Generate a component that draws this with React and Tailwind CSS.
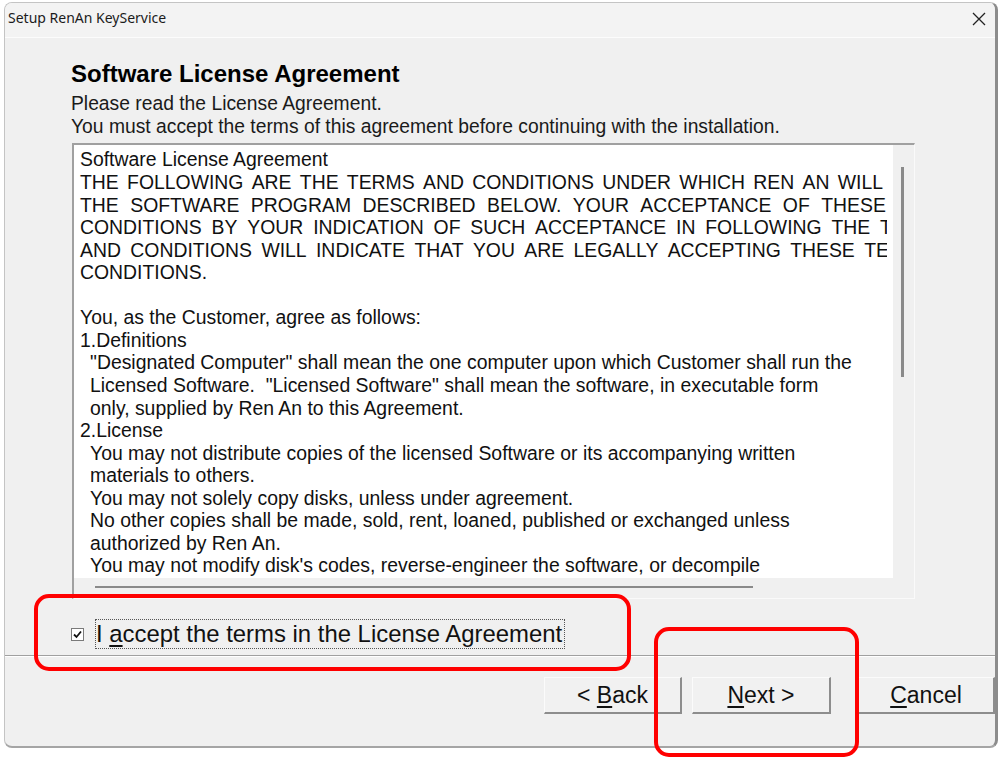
import React from 'react';

const caps = [
  { words: 'THE FOLLOWING ARE THE TERMS AND CONDITIONS UNDER WHICH REN AN WILL', w: 'w-[803px]' },
  { words: 'THE SOFTWARE PROGRAM DESCRIBED BELOW. YOUR ACCEPTANCE OF THESE', w: 'w-[806px]' },
  { words: 'CONDITIONS BY YOUR INDICATION OF SUCH ACCEPTANCE IN FOLLOWING THE TERMS', w: 'w-[868px]' },
  { words: 'AND CONDITIONS WILL INDICATE THAT YOU ARE LEGALLY ACCEPTING THESE TERMS', w: 'w-[852px]' },
];

const body = [
  { t: '' },
  { t: 'You, as the Customer, agree as follows:' },
  { t: '1.Definitions' },
  { t: '"Designated Computer" shall mean the one computer upon which Customer shall run the', i: true },
  { t: 'Licensed Software.  "Licensed Software" shall mean the software, in executable form', i: true },
  { t: 'only, supplied by Ren An to this Agreement.', i: true },
  { t: '2.License' },
  { t: 'You may not distribute copies of the licensed Software or its accompanying written', i: true },
  { t: 'materials to others.', i: true },
  { t: 'You may not solely copy disks, unless under agreement.', i: true },
  { t: 'No other copies shall be made, sold, rent, loaned, published or exchanged unless', i: true },
  { t: 'authorized by Ren An.', i: true },
  { t: "You may not modify disk's codes, reverse-engineer the software, or decompile", i: true },
];

const Btn = ({ mn, rest, pre = '', w }) => (
  <button className={`${w} h-[37px] bg-[#f1f1f1] border-t border-l border-t-[#fbfbfb] border-l-[#fbfbfb] border-r-2 border-b-2 border-r-[#8d8d8d] border-b-[#8d8d8d] text-[23px] leading-none text-[#111] flex items-center justify-center whitespace-pre`}>
    {pre}<span className="underline underline-offset-[3px]">{mn}</span>{rest}
  </button>
);

export default function App() {
  return (
    <div className="w-[1002px] h-[761px] bg-white relative overflow-hidden pt-[2px] pl-[4px] font-['Liberation_Sans',Arial,sans-serif] text-[#111]">
      <div className="w-[994px] h-[746px] flex flex-col rounded-[8px] border border-[#c4c4c4] border-r-[3px] border-r-[#8c8c8c] border-b-2 border-b-[#a5a5a5] bg-[#f0f0f0] overflow-hidden">
        {/* title bar */}
        <div className="h-[35px] shrink-0 bg-[#f3f3f3] border-b border-b-[#fcfcfc] flex items-start justify-between pt-[5px] pl-[3px] pr-[9px]">
          <span className="font-['Noto_Sans',sans-serif] text-[14px] leading-[20px] text-[#1b1b1b]">Setup RenAn KeyService</span>
          <svg className="mt-[4px]" width="14" height="14" viewBox="0 0 14 14">
            <path d="M1 1 L13 13 M13 1 L1 13" stroke="#222" strokeWidth="1.3" />
          </svg>
        </div>

        <div className="flex-1 flex flex-col">
          <div className="pl-[66px] pt-[22px]">
            <h1 className="text-[24px] leading-[28px] font-bold text-black">Software License Agreement</h1>
            <p className="mt-[5px] text-[19.3px] leading-[22.7px] text-[#1a1a1a]">Please read the License Agreement.</p>
            <p className="text-[19.3px] leading-[22.7px] text-[#1a1a1a]">You must accept the terms of this agreement before continuing with the installation.</p>

            {/* license text box */}
            <div className="mt-[5px] ml-[1px] w-[843px] h-[456px] flex flex-col border-t-2 border-l-2 border-[#a0a0a0] border-r border-b border-r-[#fafafa] border-b-[#fafafa]">
              <div className="flex h-[433px]">
                <div className="w-[813px] h-full bg-white overflow-hidden pl-[6px] pt-[3px] text-[19.4px] leading-[22.56px] text-[#111]">
                  <div className="whitespace-nowrap">Software License Agreement</div>
                  {caps.map((c, i) => (
                    <div key={i} className={`${c.w} shrink-0 flex justify-between whitespace-nowrap`}>
                      {c.words.split(' ').map((wd, j) => <span key={j}>{wd}</span>)}
                    </div>
                  ))}
                  <div className="whitespace-nowrap">CONDITIONS.</div>
                  {body.map((l, i) => (
                    <div key={i} className={`whitespace-pre h-[22.56px] ${l.i ? 'pl-[10px]' : ''}`}>{l.t}</div>
                  ))}
                </div>
                <div className="w-[6px] bg-white" />
                <div className="flex-1 bg-[#f0f0f0] pl-[8px] pt-[22px]">
                  <div className="w-[3px] h-[210px] bg-[#8a8a8a]" />
                </div>
              </div>
              <div className="flex-1 bg-[#f0f0f0] pl-[21px] pt-[8px]">
                <div className="w-[658px] h-[2px] bg-[#8a8a8a]" />
              </div>
            </div>
          </div>

          {/* accept checkbox */}
          <div className="mt-[20px] pl-[66px] h-[30px] flex items-center">
            <div className="w-[13px] h-[13px] border border-[#7a7a7a] bg-white flex items-center justify-center">
              <svg width="9" height="9" viewBox="0 0 9 9">
                <path d="M1 4.5 L3.5 7 L8 1.5" fill="none" stroke="#111" strokeWidth="1.8" />
              </svg>
            </div>
            <div className="ml-[11px] h-[30px] border border-dotted border-[#555] pr-[2px] text-[23.9px] leading-[28px] text-[#111] whitespace-nowrap">
              I <span className="underline underline-offset-[3px]">a</span>ccept the terms in the License Agreement
            </div>
          </div>

          {/* separator */}
          <div className="mt-[6px] h-px bg-[#a0a0a0]" />
          <div className="h-px bg-white" />

          {/* buttons */}
          <div className="mt-[20px] pl-[539px] flex">
            <Btn w="w-[138px]" pre="< " mn="B" rest="ack" />
            <div className="w-[10px]" />
            <Btn w="w-[139px]" mn="N" rest="ext >" />
            <div className="w-[27px]" />
            <Btn w="w-[137px]" mn="C" rest="ancel" />
          </div>
        </div>
      </div>

      {/* red annotation boxes */}
      <div className="absolute left-[34px] top-[594px] w-[597px] h-[77px] border-4 border-[#ff0000] rounded-[15px]" />
      <div className="absolute left-[654px] top-[627px] w-[205px] h-[130px] border-4 border-[#ff0000] rounded-[15px]" />
    </div>
  );
}
